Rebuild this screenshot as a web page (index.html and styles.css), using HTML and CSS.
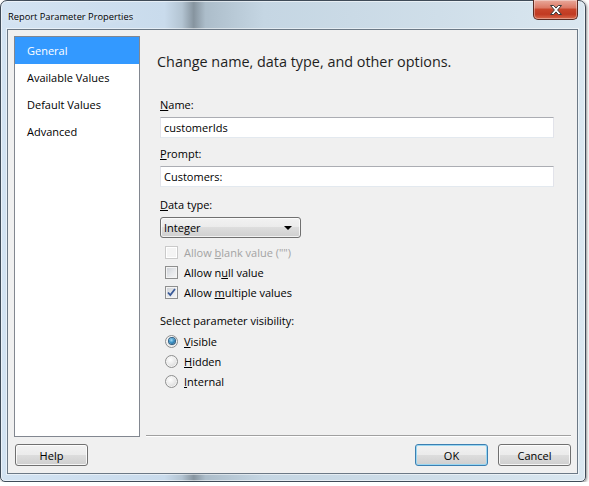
FILE: index.html
```html
<!DOCTYPE html>
<html lang="en">
<head>
    <meta charset="utf-8" />
    <title>Report Parameter Properties</title>
    <link rel="stylesheet" href="styles.css">
</head>
<body>
    <div class="window">
        <div class="titlebar">
            <span class="title">Report Parameter Properties</span>
            <button type="button" class="close" aria-label="Close">
                <svg width="18" height="12" viewBox="0 0 18 12">
                    <path d="M3.5 1.5h3.2l2.3 2.6 2.3-2.6h3.2l-3.9 4.5 3.9 4.5h-3.2l-2.3-2.6-2.3 2.6h-3.2l3.9-4.5z" fill="#fff" stroke="#3b3b3b" stroke-width="1" stroke-linejoin="round"/>
                </svg>
            </button>
        </div>

        <div class="client">
            <div class="top">
                <ul class="nav">
                    <li class="selected">General</li>
                    <li>Available Values</li>
                    <li>Default Values</li>
                    <li>Advanced</li>
                </ul>

                <div class="pane">
                    <h1 class="heading">Change name, data type, and other options.</h1>

                    <label class="field-label" for="name"><u>N</u>ame:</label>
                    <input class="textbox" type="text" id="name" value="customerIds" />

                    <label class="field-label" for="prompt"><u>P</u>rompt:</label>
                    <input class="textbox last" type="text" id="prompt" value="Customers:" />

                    <label class="field-label" for="datatype"><u>D</u>ata type:</label>
                    <div class="combo" id="datatype">
                        <span>Integer</span>
                        <span class="arrow"></span>
                    </div>

                    <div class="checks">
                        <div class="check disabled"><span class="box"></span><span>Allow <u>b</u>lank value ("")</span></div>
                        <div class="check"><span class="box"></span><span>Allow n<u>u</u>ll value</span></div>
                        <div class="check"><span class="box checked">
                            <svg width="9" height="9" viewBox="0 0 9 9"><path d="M1 4.5l2.3 2.6L8 1" fill="none" stroke="#3a5a98" stroke-width="1.8"/></svg>
                        </span><span>Allow <u>m</u>ultiple values</span></div>
                    </div>

                    <div class="section-label">Select parameter visibility:</div>
                    <div class="radios">
                        <div class="radio"><span class="dot on"></span><span><u>V</u>isible</span></div>
                        <div class="radio"><span class="dot"></span><span><u>H</u>idden</span></div>
                        <div class="radio"><span class="dot"></span><span><u>I</u>nternal</span></div>
                    </div>
                </div>
            </div>

            <div class="footer">
                <button type="button" class="btn">Help</button>
                <div class="spacer"></div>
                <button type="button" class="btn default">OK</button>
                <button type="button" class="btn">Cancel</button>
            </div>
        </div>
    </div>
</body>
</html>
```

FILE: styles.css
```css
body {
    margin: 0;
    padding: 0;
    background-color: #ffffff;
    font-family: "Open Sans", "Noto Sans", sans-serif;
    font-size: 11px;
    color: #000;
}

.window {
    width: 586px;
    height: 482px;
    box-sizing: border-box;
    border: 1px solid #3f4b58;
    border-radius: 7px 7px 5px 5px;
    background: linear-gradient(to right, #d3e3f2 0, #c9dbec 28%, #b3c4d2 31%, #86949f 33%, #acbdca 35%, #c5d6e3 45%, #cfdee9 75%, #dae7f0 100%);
    box-shadow: 1px 1px 3px rgba(0, 0, 0, 0.45), inset 0 0 0 1px rgba(255, 255, 255, 0.55);
    display: flex;
    flex-direction: column;
    padding: 0 7px 7px 6px;
}

.titlebar {
    height: 28px;
    display: flex;
    align-items: flex-start;
}

.title {
    margin: 9px 0 0 1px;
    font-size: 9.3px;
    color: #000;
    text-shadow: 0 0 6px rgba(255, 255, 255, 0.9);
}

.close {
    margin-left: auto;
    margin-top: -1px;
    width: 45px;
    height: 20px;
    padding: 0;
    border: 1px solid #5b2a22;
    border-top: none;
    border-radius: 0 0 5px 5px;
    background: linear-gradient(to bottom, #e9a99b 0, #dc7a66 40%, #c8452b 50%, #c13a22 75%, #d9694c 100%);
    box-shadow: inset 0 0 0 1px rgba(255, 255, 255, 0.35);
    display: flex;
    align-items: center;
    justify-content: center;
}

.client {
    flex: 1;
    background-color: #f0f0f0;
    border: 1px solid #6c7986;
    box-shadow: 0 0 0 1px rgba(255, 255, 255, 0.5);
    padding: 6px 6px 7px 6px;
    display: flex;
    flex-direction: column;
}

.top {
    flex: 1;
    display: flex;
}

.nav {
    width: 126px;
    box-sizing: border-box;
    margin: 0;
    padding: 0;
    list-style: none;
    background-color: #fff;
    border: 1px solid #828790;
}

.nav li {
    height: 27px;
    line-height: 27px;
    padding-left: 12px;
    font-size: 11px;
}

.nav li.selected {
    background-color: #3399ff;
    color: #fff;
}

.pane {
    flex: 1;
    margin-left: 6px;
    padding: 0 17px 0 14px;
    border-bottom: 1px solid #a0a0a0;
    box-shadow: 0 1px 0 #fff;
    margin-bottom: 1px;
}

.heading {
    margin: 16px 0 25px -3px;
    font-size: 14.4px;
    font-weight: normal;
    line-height: 20px;
    color: #1e1e1e;
}

.field-label {
    display: block;
    line-height: 16px;
    margin-bottom: 4px;
}

.textbox {
    display: block;
    width: 100%;
    height: 21px;
    box-sizing: border-box;
    margin: 0 0 8px 0;
    padding: 0 3px;
    font-family: inherit;
    font-size: 11px;
    color: #000;
    background-color: #fff;
    border: 1px solid #e2e3ea;
    border-top-color: #abadb3;
    border-bottom-color: #e3e9ef;
}

.textbox.last {
    margin-bottom: 10px;
}

.combo {
    width: 141px;
    height: 21px;
    box-sizing: border-box;
    border: 1px solid #707070;
    border-radius: 3px;
    background: linear-gradient(to bottom, #f2f2f2 0, #ebebeb 50%, #dddddd 50%, #cfcfcf 100%);
    box-shadow: inset 0 0 0 1px rgba(255, 255, 255, 0.7);
    display: flex;
    align-items: center;
    padding: 0 8px 0 3px;
}

.arrow {
    margin-left: auto;
    width: 0;
    height: 0;
    border-left: 4px solid transparent;
    border-right: 4px solid transparent;
    border-top: 4px solid #000;
}

.checks {
    margin-top: 4px;
    padding-left: 5px;
}

.check, .radio {
    height: 20px;
    display: flex;
    align-items: center;
}

.box, .dot {
    width: 13px;
    height: 13px;
    box-sizing: border-box;
    margin-right: 6px;
    border: 1px solid #8e8f8f;
    background: linear-gradient(135deg, #cbcfd5 0, #e6e8eb 55%, #f6f6f6 100%);
    box-shadow: inset 0 0 0 1px #f4f4f4;
    display: flex;
    align-items: center;
    justify-content: center;
}

.check.disabled {
    color: #a3a3a3;
}

.check.disabled .box {
    border-color: #cacaca;
    background: #f4f4f4;
    box-shadow: inset 0 0 0 1px #fff;
}

.section-label {
    margin-top: 11px;
    line-height: 16px;
}

.radios {
    margin-top: 2px;
    padding-left: 5px;
}

.dot {
    border-radius: 50%;
    background: radial-gradient(circle at 40% 35%, #ffffff 0, #e8e8e8 50%, #c9c9c9 100%);
}

.dot.on::after {
    content: "";
    width: 6px;
    height: 6px;
    border-radius: 50%;
    background: radial-gradient(circle at 40% 35%, #a5dbf5 0, #3d95c9 45%, #10446e 100%);
    box-shadow: 0 0 0 1px #2f5f84;
}

.footer {
    margin-top: 7px;
    display: flex;
    gap: 10px;
    padding-left: 1px;
}

.spacer {
    flex: 1;
}

.btn {
    width: 73px;
    height: 22px;
    padding: 0;
    font-family: inherit;
    font-size: 11px;
    color: #000;
    border: 1px solid #707070;
    border-radius: 3px;
    background: linear-gradient(to bottom, #f2f2f2 0, #ebebeb 50%, #dddddd 50%, #cfcfcf 100%);
    box-shadow: inset 0 0 0 1px rgba(255, 255, 255, 0.8);
}

.btn.default {
    border-color: #3c7fb1;
    box-shadow: inset 0 0 0 1px #9ad7f2;
}
```
